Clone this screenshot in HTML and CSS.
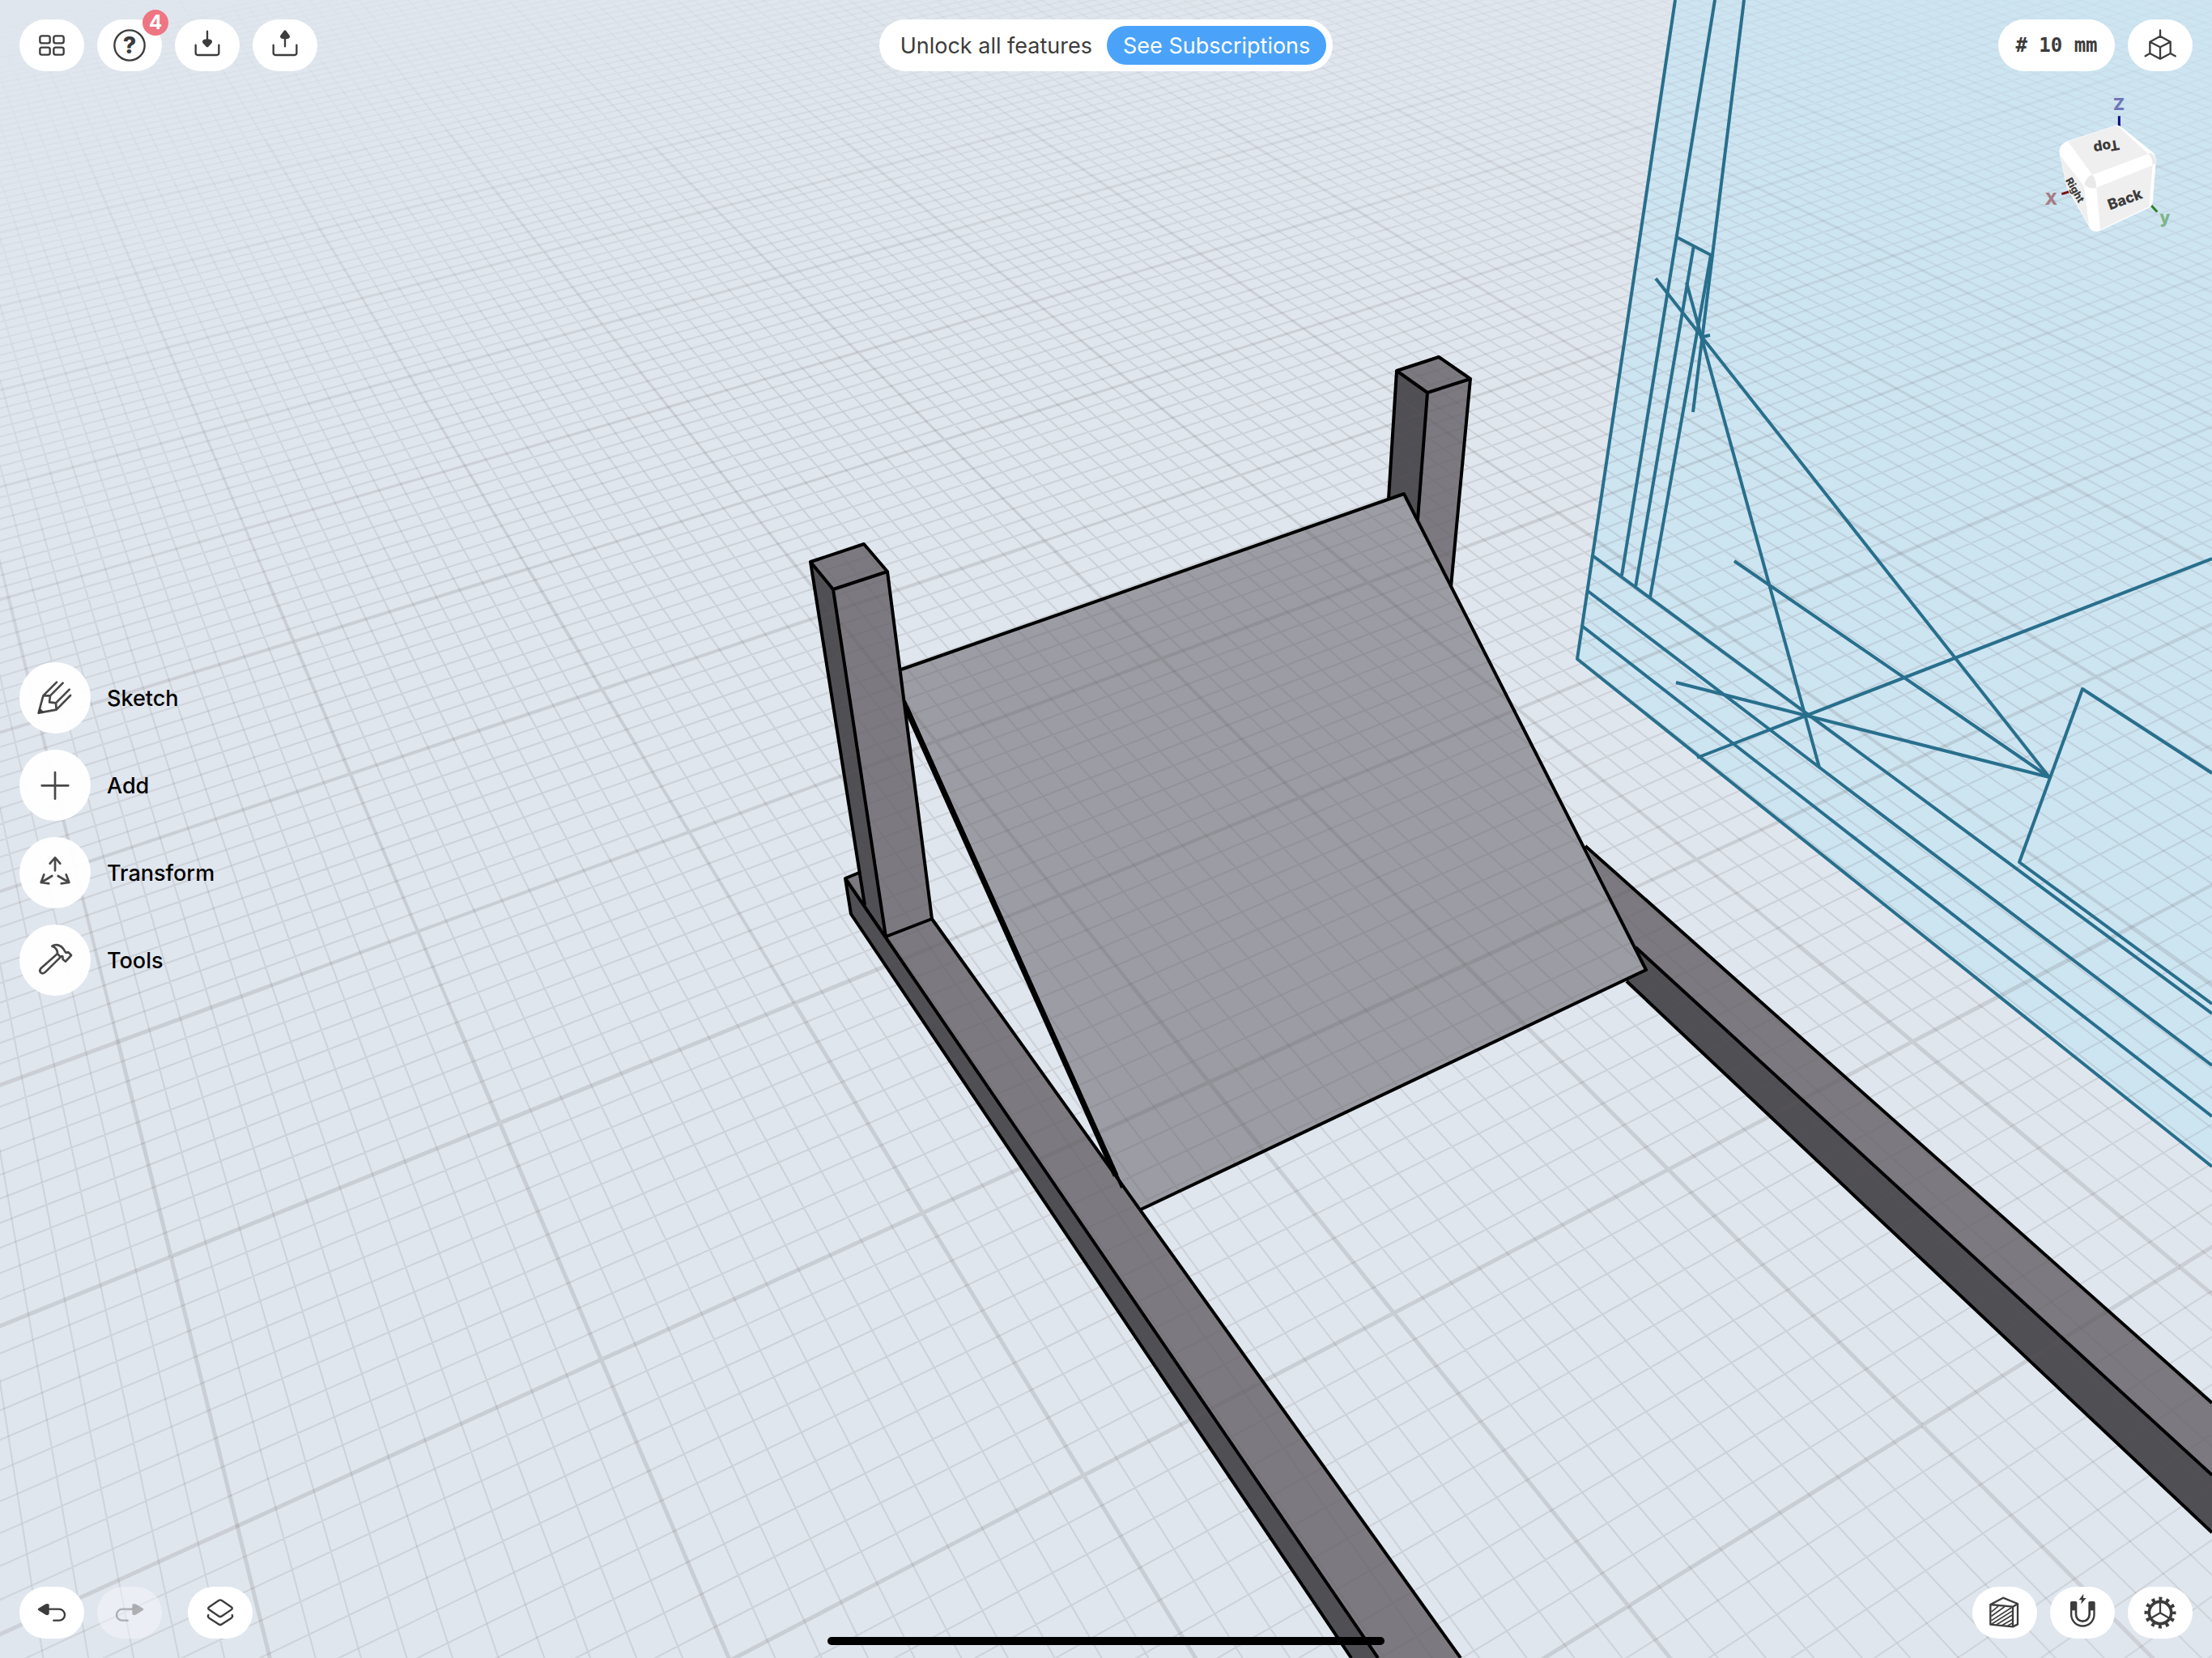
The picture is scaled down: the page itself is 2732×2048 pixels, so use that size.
FILE: index.html
```html
<!DOCTYPE html>
<html lang="en">
<head>
<meta charset="utf-8">
<meta name="viewport" content="width=device-width, initial-scale=1">
<title>3D workspace</title>
<link rel="stylesheet" href="styles.css">
</head>
<body>
<main class="workspace">
  <svg class="scene" viewBox="0 0 2732 2048" preserveAspectRatio="xMidYMid slice" aria-label="3D model">
    <!-- sketch plane -->
    <path class="plane" d="M2069 0L1948 814L2732 1441V0Z"/>
    <!-- solid faces -->
    <g>
      <path class="face-dark" d="M1044 1085L1051 1129L1669 2048H1702L1093 1157Z"/>
      <path class="face-mid" d="M1044 1085L1061 1078L1151 1135L1804 2048H1702Z"/>
      <path class="face-dark" d="M1725 458L1763 485L1751 642L1715 616Z"/>
      <path class="face-mid" d="M1725 458L1777 441L1816 468L1792 725L1751 642L1763 485Z"/>
      <path class="face-mid" d="M1958 1045L2732 1733V1822L2020 1170Z"/>
      <path class="face-dark" d="M2020 1170L2732 1822V1893L2009 1212Z"/>
      <path class="face-light" d="M1113 827L1734 610L2033 1198L1409 1494L1386 1467L1117 868Z"/>
      <path class="face-dark" d="M1001 694L1029 728L1094 1157L1068 1118Z"/>
      <path class="face-mid" d="M1001 694L1067 672L1096 706L1151 1135L1094 1157L1029 728Z"/>
    </g>
    <g id="grid" class="grid"></g>
    <!-- sketch curves -->
    <g class="curves">
      <path d="M2069 0L1948 814L2732 1441"/>
      <path d="M2118 0L2003 711M2154 0L2091 509"/>
      <path d="M2071 293L2113 315L2038 738M2092 303L2020 725"/>
      <path d="M2045 344L2531 960M2083 349L2247 948M2099 417L2112 414"/>
      <path d="M1968 687L2338 960L2732 1252"/>
      <path d="M1961 730L2263 960L2732 1316"/>
      <path d="M1955 774L2194 960L2732 1379"/>
      <path d="M2142 693L2531 960L2070 843"/>
      <path d="M2096 936L2732 690"/>
      <path d="M2732 955L2572 851L2494 1065L2732 1240"/>
    </g>
    <!-- solid edges -->
    <g class="edges">
      <path d="M1061 1078L1044 1085L1051 1129L1669 2048M1044 1085L1702 2048M1151 1135L1804 2048"/>
      <path d="M1715 616L1725 458L1777 441L1816 468L1792 725M1725 458L1763 485L1751 642M1763 485L1816 468"/>
      <path d="M1958 1045L2732 1733M2020 1170L2732 1822M2009 1212L2732 1893"/>
      <path d="M1113 827L1734 610L2033 1198L1409 1494M1117 866L1386 1467"/>
      <path class="edge-thick" d="M1119 874L1378 1452"/>
      <path d="M1068 1118L1001 694L1067 672L1096 706L1151 1135L1094 1157L1029 728L1001 694M1029 728L1096 706"/>
    </g>
  </svg>

  <header class="bar bar-top">
    <div class="group">
      <button class="pill" aria-label="Designs"><svg viewBox="0 0 240 192"><g class="ln"><rect x="76" y="61" width="37" height="27" rx="7"/><rect x="127" y="61" width="37" height="27" rx="7"/><rect x="76" y="104" width="37" height="27" rx="7"/><rect x="127" y="104" width="37" height="27" rx="7"/></g></svg></button>
      <button class="pill" aria-label="Help"><svg viewBox="0 0 240 192"><circle class="ln" cx="120" cy="96" r="56"/><text class="mark" x="120" y="127">?</text></svg><span class="badge">4</span></button>
      <button class="pill" aria-label="Import"><svg viewBox="0 0 240 192"><path class="ln" d="M77 95V124Q77 132 85 132H155Q163 132 163 124V95M120 44V84"/><path class="fl" d="M102 83Q102 73 120 73Q138 73 138 83Q138 86 135 89L124 101Q120 105 116 101L105 89Q102 86 102 83Z"/></svg></button>
      <button class="pill" aria-label="Export"><svg viewBox="0 0 240 192"><path class="ln" d="M77 95V124Q77 132 85 132H155Q163 132 163 124V95M120 60V100"/><path class="fl" d="M102 63Q102 73 120 73Q138 73 138 63Q138 60 135 57L124 42Q120 38 116 42L105 57Q102 60 102 63Z"/></svg></button>
    </div>
    <div class="banner"><span>Unlock all features</span><button class="cta">See Subscriptions</button></div>
    <div class="side">
      <div class="group">
        <button class="pill units"># 10 mm</button>
        <button class="pill" aria-label="View"><svg viewBox="0 0 240 192"><path class="ln" d="M120 62L158 83V126L120 146L82 126V83ZM82 83L120 103L158 83M120 103V146M120 62V40M82 126L65 136M158 126L176 136"/></svg></button>
      </div>
      <svg class="cube" viewBox="0 300 804 600" aria-label="View cube">
        <path d="M532 430V470" stroke="#0b0b8c" stroke-width="9"/>
        <path d="M319 719L345 711" stroke="#7a1212" stroke-width="9"/>
        <path d="M646 756L673 785" stroke="#2f8020" stroke-width="9"/>
        <path fill="#fff" d="M345 521L518 465Q530 462 540 470L655 563Q669 575 668 598L656 752Q654 764 642 770L462 855Q440 863 425 848L338 695L311 570Q306 533 345 521Z"/>
        <path fill="#efefef" d="M343 524L515 467Q526 466 536 475L640 571L432 648Z"/>
        <path fill="#efefef" d="M448 695L656 612L643 765L462 851Z"/>
        <path fill="#efefef" d="M313 575L402 690L420 836L340 694Z"/>
        <path fill="#e9e9e9" d="M403 684Q408 656 432 647Q446 662 448 695Q424 704 403 684ZM640 568Q666 566 667 605L656 612Q656 584 640 570Z"/>
        <g class="face-label">
          <text font-size="52" transform="translate(482 526) rotate(170)">Top</text>
          <text font-size="54" transform="translate(560 756) rotate(-20)">Back</text>
          <text font-size="38" transform="translate(357 711) rotate(60)">Right</text>
        </g>
        <g class="axis-label">
          <text x="531" y="409" fill="#7076b6">Z</text>
          <text x="280" y="759" fill="#a57d84">X</text>
          <text x="702" y="827" fill="#7db487">y</text>
        </g>
      </svg>
    </div>
  </header>

  <nav class="tools" aria-label="Tools">
    <button class="tool"><span class="disc"><svg viewBox="0 0 264 264"><path class="ln" d="M71 188L88 124L114 124L111 148L135 151L137 176ZM88 124L138 74M114 124L161 77M135 151L185 101M137 176L189 123"/><path class="fl" d="M68 191L74 168L92 186Z"/></svg></span>Sketch</button>
    <button class="tool"><span class="disc"><svg viewBox="0 0 264 264"><path class="ln" d="M132 84V182M83 133H181"/></svg></span>Add</button>
    <button class="tool"><span class="disc"><svg viewBox="0 0 264 264"><path class="ln" d="M132 124V77M113 98L132 76L151 98M121 144L80 168M91 139L80 168L109 172M143 144L184 168M173 139L184 168L155 172"/></svg></span>Transform</button>
    <button class="tool"><span class="disc"><svg viewBox="0 0 264 264"><path class="ln" d="M121 80Q130 74 142 76Q158 80 166 95L172 104L182 103L192 114L171 137L161 129L160 118L150 118L141 108Q142 88 121 80ZM141 108L79 163Q72 172 80 179Q88 184 97 175L154 119"/></svg></span>Tools</button>
  </nav>

  <footer class="bar bar-bottom">
    <div class="group">
      <button class="pill" aria-label="Undo"><svg viewBox="0 0 240 192"><path class="ln" d="M105 83H147A21 21 0 0 1 147 125H127"/><path class="fl" d="M70 80Q66 83 70 87L98 104Q110 108 110 98V68Q110 60 98 64Z"/></svg></button>
      <button class="pill off" disabled aria-label="Redo"><svg viewBox="0 0 240 192"><g opacity=".35"><path class="ln" d="M129 83H93A21 21 0 0 0 93 125H113"/><path class="fl" d="M170 80Q174 83 170 87L142 104Q130 108 130 98V68Q130 60 142 64Z"/></g></svg></button>
      <button class="pill spaced" aria-label="Items"><svg viewBox="0 0 240 192"><path class="ln" d="M114 51Q120 47 126 51L161 75Q168 80 161 85L126 109Q120 113 114 109L79 85Q72 80 79 75ZM76 105Q72 111 79 116L114 139Q120 143 126 139L161 116Q168 111 164 105"/></svg></button>
    </div>
    <div class="group">
      <button class="pill" aria-label="Section view"><svg viewBox="0 0 240 192"><g class="ln"><path d="M67 66L114 41L168 63V139L150 148L67 140ZM67 66L150 74L168 63M150 74V148"/><path d="M72 92L95 73M72 108L118 75M72 124L144 78M72 138L146 91M90 140L146 106M112 142L146 122M132 144L146 136" stroke-width="5"/></g></svg></button>
      <button class="pill" aria-label="Snapping"><svg viewBox="0 0 240 192"><path class="fl" d="M75 59Q75 54 80 54H95Q100 54 100 59V103A21 21 0 0 0 142 103V59Q142 54 147 54H162Q167 54 167 59V103A46 46 0 0 1 75 103ZM124 26L107 49H117L115 64L134 42H123Z"/><path d="M87 88V103A34 34 0 0 0 155 103V88" fill="none" stroke="#fff" stroke-width="10"/></svg></button>
      <button class="pill" aria-label="Settings"><svg viewBox="0 0 240 192"><g class="ln"><circle cx="120" cy="96" r="41" stroke-width="11"/><circle class="teeth" cx="120" cy="96" r="51" pathLength="24"/><path d="M120 97V56M120 97L85 117M120 97L155 117"/></g></svg></button>
    </div>
    <div class="home"></div>
  </footer>
</main>
<script src="grid.js"></script>
</body>
</html>
```
FILE: styles.css
```css
* { box-sizing: border-box; }
body {
  margin: 0;
  background: #e0e6ee;
  font-family: Inter, "Liberation Sans", sans-serif;
  color: #3c3c3c;
}
button {
  margin: 0;
  padding: 0;
  border: 0;
  font: inherit;
  color: inherit;
  background: none;
}
.workspace {
  position: relative;
  min-height: 100vh;
  display: grid;
  grid-template-rows: 1fr auto 1fr;
  overflow: hidden;
}
.scene {
  position: absolute;
  inset: 0;
  width: 100%;
  height: 100%;
}
.plane { fill: #cde4f1; }
.face-light { fill: #9c9ca4; }
.face-mid { fill: #7c7a80; }
.face-dark { fill: #504f54; }
.grid path { fill: none; stroke: #645c5e; }
.curves path { fill: none; stroke: #286f8c; stroke-width: 4; stroke-linejoin: round; }
.edges path { fill: none; stroke: #000; stroke-width: 4; stroke-linejoin: round; }
.edges .edge-thick { stroke-width: 7; }

.bar {
  position: relative;
  display: grid;
  grid-template-columns: 1fr auto 1fr;
  padding: 24px;
}
.bar-top { align-items: start; }
.bar-bottom { align-items: end; grid-template-columns: 1fr 1fr; }
.group { display: flex; gap: 16px; }
.bar-bottom .group + .group { justify-content: flex-end; }
.pill {
  position: relative;
  width: 80px;
  height: 64px;
  border-radius: 32px;
  background: #fff;
}
.pill svg { display: block; width: 80px; height: 64px; }
.pill.off { background: rgba(245, 245, 252, .5); }
.spaced { margin-left: 16px; }
.units {
  width: 144px;
  font: bold 24px "DejaVu Sans Mono", monospace;
}
.badge {
  position: absolute;
  top: -12px;
  right: -8px;
  width: 32px;
  height: 32px;
  border-radius: 50%;
  background: #ee7582;
  color: #fff;
  font-size: 24px;
  font-weight: 700;
  line-height: 32px;
  text-align: center;
}
.ln, .ln * {
  fill: none;
  stroke: #3c3c3c;
  stroke-linecap: round;
  stroke-linejoin: round;
}
.ln { stroke-width: 7; }
.ln .teeth {
  stroke-width: 15;
  stroke-linecap: butt;
  stroke-dasharray: .9 1.1;
  stroke-dashoffset: .45;
}
.fl { fill: #3c3c3c; }
.mark { fill: #3c3c3c; font-size: 86px; font-weight: 800; text-anchor: middle; }

.banner {
  display: flex;
  align-items: center;
  gap: 18px;
  height: 64px;
  padding: 0 8px 0 26px;
  border-radius: 32px;
  background: #fff;
  font-size: 27px;
}
.cta {
  height: 48px;
  padding: 0 20px;
  border-radius: 24px;
  background: #4aa3f8;
  color: #fff;
}
.side {
  display: flex;
  flex-direction: column;
  align-items: flex-end;
  gap: 12px;
}
.cube { width: 268px; height: 200px; }
.face-label { fill: #3c3c3c; font-weight: 800; text-anchor: middle; }
.axis-label { font-size: 62px; font-weight: 800; text-anchor: middle; }

.tools {
  position: relative;
  display: flex;
  flex-direction: column;
  align-items: flex-start;
  gap: 20px;
  padding-left: 24px;
}
.tool {
  display: flex;
  align-items: center;
  gap: 20px;
  color: #000;
  font-size: 27px;
  font-weight: 500;
}
.disc {
  width: 88px;
  height: 88px;
  border-radius: 50%;
  background: rgba(255, 255, 255, .95);
}
.disc svg { display: block; width: 88px; height: 88px; }
.disc .ln { stroke: #484848; stroke-width: 8; }

.home {
  position: absolute;
  left: 50%;
  bottom: 16px;
  width: 688px;
  height: 10px;
  margin-left: -344px;
  border-radius: 5px;
  background: #000;
}
```
FILE: grid.js
```js
// Projects the ground plane into the view. One unit is a major grid cell.
const H = [397.43245, 44.058402, 145.72636, -75.689802, 108.46917, 1286.79, 0.052444301, -0.10111123];
const CENTER = [3.3, 0.8];
const FULL = 3;
const LIMIT = 12.2;

const depth = (u, v) => H[6] * u + H[7] * v + 1;
function project(u, v) {
  const w = depth(u, v);
  return [(H[0] * u + H[1] * v + H[2]) / w, (H[3] * u + H[4] * v + H[5]) / w];
}

const buckets = new Map();
function segment(u1, v1, u2, v2, major) {
  const um = (u1 + u2) / 2, vm = (v1 + v2) / 2, w = depth(um, vm);
  if (depth(u1, v1) < 0.2 || depth(u2, v2) < 0.2) return;
  const d = Math.hypot(um - CENTER[0], vm - CENTER[1]);
  const fade = Math.min(1, (LIMIT - d) / (LIMIT - FULL));
  if (fade <= 0) return;
  const a = project(u1, v1), b = project(u2, v2);
  if (Math.max(a[0], b[0]) < 0 || Math.min(a[0], b[0]) > 2732) return;
  if (Math.max(a[1], b[1]) < 0 || Math.min(a[1], b[1]) > 2048) return;
  const width = major ? Math.max(2, Math.min(5, Math.round(4.6 / w))) : 2;
  const strength = Math.pow(Math.ceil(fade * 30) / 30, 1.4);
  const alpha = (strength * (major ? 0.18 : 0.15)).toFixed(3);
  const key = width + '|' + alpha;
  const line = `M${a[0].toFixed(1)} ${a[1].toFixed(1)}L${b[0].toFixed(1)} ${b[1].toFixed(1)}`;
  buckets.set(key, (buckets.get(key) || '') + line);
}

for (let i = -150; i <= 200; i++) {
  const c = i / 10, major = i % 10 === 0;
  for (let s = -15; s < 20; s += 0.5) {
    segment(c, s, c, s + 0.5, major);
    segment(s, c, s + 0.5, c, major);
  }
}

const layer = document.getElementById('grid');
for (const [key, d] of buckets) {
  const [width, alpha] = key.split('|');
  const path = document.createElementNS('http://www.w3.org/2000/svg', 'path');
  path.setAttribute('d', d);
  path.setAttribute('stroke-width', width);
  path.setAttribute('stroke-opacity', alpha);
  layer.appendChild(path);
}
```
